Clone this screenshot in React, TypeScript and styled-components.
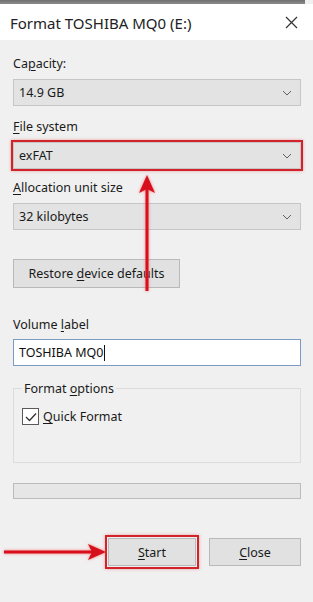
import React from "react";
import styled, { createGlobalStyle } from "styled-components";

const Global = createGlobalStyle`
  html, body { margin: 0; padding: 0; background: #f0f0f0; }
  body { font-family: "Noto Sans", "Open Sans", sans-serif; }
`;

const Window = styled.div`
  position: relative;
  width: 313px;
  height: 602px;
  background: #f0f0f0;
  color: #1a1a1a;
  font-size: 12.5px;
  overflow: hidden;
  display: flex;
  flex-direction: column;
`;

const BackStrip = styled.div`
  height: 4px;
  background: linear-gradient(#6f6f6f, #8c8c8c);
  margin-right: 8px;
`;

const TitleBar = styled.div`
  height: 36px;
  background: #ffffff;
  display: flex;
  align-items: center;
  justify-content: space-between;
  padding: 0 15px 0 10px;
`;

const Title = styled.div`
  font-size: 15px;
  color: #222;
  margin-top: 1px;
`;

const Body = styled.div`
  padding: 0 12px 0 13px;
  display: flex;
  flex-direction: column;
`;

const Label = styled.div<{ $top: number }>`
  margin-top: ${(p) => p.$top}px;
  height: 16px;
  line-height: 16px;
  color: #1a1a1a;
`;

const Key = styled.span`
  text-decoration: underline;
  text-underline-offset: 2px;
  text-decoration-thickness: 1px;
`;

const Select = styled.div<{ $highlight?: boolean }>`
  margin-top: 7px;
  height: 27px;
  box-sizing: border-box;
  background: #e3e3e3;
  border: 1px solid #c6c6c6;
  display: flex;
  align-items: center;
  justify-content: space-between;
  padding: 0 8px 0 5px;
  color: #1a1a1a;
  ${(p) =>
    p.$highlight &&
    `outline: 2.5px solid #d2222c; outline-offset: 0px; box-shadow: 0 0 3px 2px rgba(230,60,60,0.45);`}
`;

const Chevron = () => (
  <svg width="10" height="6" viewBox="0 0 10 6">
    <path d="M1 1 L5 5 L9 1" fill="none" stroke="#606060" strokeWidth="1" />
  </svg>
);

const PushButton = styled.div<{ $width: number; $top?: number; $height?: number }>`
  width: ${(p) => p.$width}px;
  height: ${(p) => p.$height ?? 28}px;
  margin-top: ${(p) => p.$top ?? 0}px;
  box-sizing: border-box;
  background: #e1e1e1;
  border: 1px solid #b9b9b9;
  display: flex;
  align-items: center;
  justify-content: center;
  color: #1a1a1a;
`;

const TextInput = styled.div`
  margin-top: 6px;
  height: 27px;
  box-sizing: border-box;
  background: #ffffff;
  border: 1px solid #7b9ac4;
  display: flex;
  align-items: center;
  padding: 0 5px;
  color: #111;
`;

const Caret = styled.span`
  display: inline-block;
  width: 1px;
  height: 16px;
  background: #111;
  margin-left: 1px;
`;

const Group = styled.fieldset`
  margin: 14px 0 0 0;
  padding: 6px 8px 0 8px;
  height: 83px;
  box-sizing: border-box;
  border: 1px solid #dcdcdc;
  border-radius: 0;
`;

const Legend = styled.legend`
  padding: 0 2px;
  margin-left: 0px;
  color: #1a1a1a;
`;

const CheckRow = styled.div`
  display: flex;
  align-items: center;
  gap: 4px;
  margin-top: 5px;
`;

const CheckBox = styled.div`
  width: 17px;
  height: 17px;
  box-sizing: border-box;
  border: 1px solid #5a5a5a;
  background: #fff;
  display: flex;
  align-items: center;
  justify-content: center;
`;

const Progress = styled.div`
  margin-top: 20px;
  height: 16px;
  box-sizing: border-box;
  background: #e6e6e6;
  border: 1px solid #bcbcbc;
`;

const ButtonRow = styled.div`
  margin-top: 39px;
  display: flex;
  justify-content: flex-end;
  gap: 12px;
`;

const StartWrap = styled.div`
  padding: 1px;
  outline: 2.5px solid #d2222c;
  box-shadow: 0 0 3px 2px rgba(230, 60, 60, 0.45);
  margin-top: -1px;
`;

const Arrow = styled.svg<{ $left: number; $top: number }>`
  position: absolute;
  left: ${(p) => p.$left}px;
  top: ${(p) => p.$top}px;
  overflow: visible;
  filter: drop-shadow(0 0 1.5px rgba(255, 80, 80, 0.7));
`;

export default function App() {
  return (
    <>
      <Global />
      <Window>
        <BackStrip />
        <TitleBar>
          <Title>Format TOSHIBA MQ0 (E:)</Title>
          <svg width="13" height="13" viewBox="0 0 13 13">
            <path d="M1 1 L12 12 M12 1 L1 12" stroke="#333" strokeWidth="1.2" />
          </svg>
        </TitleBar>
        <Body>
          <Label $top={16}>
            Ca<Key>p</Key>acity:
          </Label>
          <Select>
            <span>14.9 GB</span>
            <Chevron />
          </Select>

          <Label $top={13}>
            <Key>F</Key>ile system
          </Label>
          <Select $highlight>
            <span>exFAT</span>
            <Chevron />
          </Select>

          <Label $top={11}>
            <Key>A</Key>llocation unit size
          </Label>
          <Select>
            <span>32 kilobytes</span>
            <Chevron />
          </Select>

          <PushButton $width={167} $top={29} $height={29}>
            <span>
              Restore <Key>d</Key>evice defaults
            </span>
          </PushButton>

          <Label $top={29}>
            Volume <Key>l</Key>abel
          </Label>
          <TextInput>
            TOSHIBA MQ0
            <Caret />
          </TextInput>

          <Group>
            <Legend>
              Format <Key>o</Key>ptions
            </Legend>
            <CheckRow>
              <CheckBox>
                <svg width="12" height="10" viewBox="0 0 12 10">
                  <path d="M1 5 L4.5 8.5 L11 1.5" fill="none" stroke="#333" strokeWidth="1.3" />
                </svg>
              </CheckBox>
              <span>
                <Key>Q</Key>uick Format
              </span>
            </CheckRow>
          </Group>

          <Progress />

          <ButtonRow>
            <StartWrap>
              <PushButton $width={88}>
                <span>
                  <Key>S</Key>tart
                </span>
              </PushButton>
            </StartWrap>
            <PushButton $width={92}>
              <span>
                <Key>C</Key>lose
              </span>
            </PushButton>
          </ButtonRow>
        </Body>

        <Arrow $left={138} $top={175} width="18" height="116" viewBox="0 0 18 116">
          <path d="M9 0 L17 18 L9 14 L1 18 Z" fill="#d6101c" />
          <rect x="7.5" y="12" width="3" height="104" fill="#d6101c" />
        </Arrow>
        <Arrow $left={4} $top={544} width="102" height="16" viewBox="0 0 102 16">
          <rect x="0" y="6.5" width="88" height="3" fill="#d6101c" />
          <path d="M102 8 L84 0 L88 8 L84 16 Z" fill="#d6101c" />
        </Arrow>
      </Window>
    </>
  );
}
